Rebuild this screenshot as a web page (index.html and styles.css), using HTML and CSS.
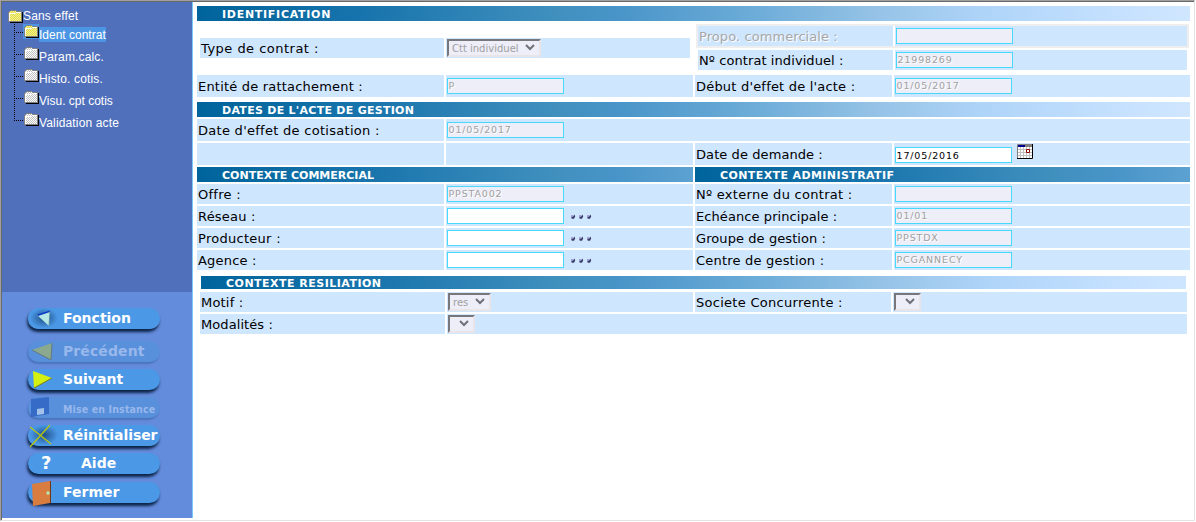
FILE: index.html
```
<!DOCTYPE html>
<html lang="fr">
<head>
<meta charset="utf-8">
<title>Gestion du contrat</title>
<link rel="stylesheet" href="styles.css">
</head>
<body>
<svg width="0" height="0" class="defs">
  <defs>
    <pattern id="checkGrey" width="2" height="2" patternUnits="userSpaceOnUse"><rect width="2" height="2" fill="#fff"/><path d="M0 0h1v1H0zM1 1h1v1H1z" fill="#c0c0c0"/></pattern>
    <pattern id="checkYellow" width="2" height="2" patternUnits="userSpaceOnUse"><rect width="2" height="2" fill="#ffff70"/><path d="M0 0h1v1H0zM1 1h1v1H1z" fill="#d8d068"/></pattern>
    <g id="folder">
      <path d="M14 3h1v11H2v-1h12z" fill="#000"/>
      <path d="M1 3h1V2h1V1h5v1h1v1h5v10H1z" stroke="none"/>
      <path d="M.5 12.500V3.500l2-2h5l1 1h5v10" fill="none" stroke="#808080"/>
      <path d="M1.500 12V4.500h6l1-1h4.500" fill="none" stroke="#fff"/>
      <path d="M0 12.500h14" stroke="#808080"/>
    </g>
    <g id="dots">
      <g id="dot"><path d="M0 2.500h2L3.500 .5 4.200 2.500 3 4.800H.800z" fill="#3c3c6c"/><path d="M0 1h2v1.500H0z" fill="#a8a0e0"/></g>
      <use href="#dot" x="8"/><use href="#dot" x="16"/>
    </g>
  </defs>
</svg>
<div class="frame">
  <aside class="sidebar">
    <nav class="tree">
      <div class="root"><svg class="folder" fill="url(#checkYellow)"><use href="#folder"/></svg><span>Sans effet</span></div>
      <ul>
        <li class="current"><svg class="folder" fill="url(#checkYellow)"><use href="#folder"/></svg><span>Ident contrat</span></li>
        <li><svg class="folder" fill="url(#checkGrey)"><use href="#folder"/></svg><span>Param.calc.</span></li>
        <li><svg class="folder" fill="url(#checkGrey)"><use href="#folder"/></svg><span>Histo. cotis.</span></li>
        <li><svg class="folder" fill="url(#checkGrey)"><use href="#folder"/></svg><span class="t0">Visu. cpt cotis</span></li>
        <li><svg class="folder" fill="url(#checkGrey)"><use href="#folder"/></svg><span>Validation acte</span></li>
      </ul>
    </nav>
    <div class="actions">
      <div class="btn b1 shade"><svg class="ico" viewBox="0 0 30 26"><path d="M9 7 22 3l-1 15z" fill="#b4e8e4"/><path d="M9 6.500 22 2.500v1.500L10 8z" fill="#0838c8"/><path d="M22 3l-1 15" stroke="#5888a0" stroke-width=".8"/></svg><span>Fonction</span></div>
      <div class="btn b2 off"><svg class="ico" viewBox="0 0 30 26"><path d="M4 9 24 2l-1 17z" fill="#c8c830"/><path d="M24 2l-1 17L4 9" fill="none" stroke="#706010"/></svg><span>Précédent</span></div>
      <div class="btn b3"><svg class="ico" viewBox="0 0 30 26"><path d="M5 2 24 9 6 19z" fill="#d4f010"/><path d="M6 19 24 9" stroke="#808010"/></svg><span>Suivant</span></div>
      <div class="btn b4 off"><svg class="ico" viewBox="0 0 30 26"><path d="M3 2 21 0v17L3 20z" fill="#1040b0"/><path d="M9 12l7-1v6l-7 1z" fill="#fff"/></svg><span>Mise en Instance</span></div>
      <div class="btn b5 shade"><svg class="ico" viewBox="0 0 30 26"><path d="M2 2 23 19M22 0 2 22" fill="none" stroke="#b8c810" stroke-width="1.200"/></svg><span>Réinitialiser</span></div>
      <div class="btn b6"><b class="mark">?</b><span>Aide</span></div>
      <div class="btn b7"><svg class="ico" viewBox="0 0 30 26"><path d="M4 2 22-1v22L5 24z" fill="#d87c40"/><path d="M22.500-1v22" stroke="#703818"/><circle cx="20" cy="11" r="1.700" fill="#b8e8b0"/></svg><span>Fermer</span></div>
    </div>
  </aside>
  <main class="main">
    <h2 class="bar s7">IDENTIFICATION</h2>
    <section class="ident">
      <div class="kind">
        <div class="cell"><label class="s5">Type de contrat :</label></div>
        <div class="cell"><div class="select wide"><span>Ctt individuel</span><svg class="chev"><path d="M1 1l4 4 4-4"/></svg></div></div>
      </div>
      <div class="numbers">
        <div class="pair disabled"><div class="cell"><label>Propo. commerciale :</label></div><div class="cell"><div class="input ro"></div></div></div>
        <div class="pair"><div class="cell"><label>Nº contrat individuel :</label></div><div class="cell"><div class="input ro">21998269</div></div></div>
      </div>
    </section>
    <div class="row tall r-ent"><div class="cell"><label class="s2">Entité de rattachement :</label></div><div class="cell"><div class="input ro">P</div></div><div class="cell"><label class="s2">Début d'effet de l'acte :</label></div><div class="cell"><div class="input ro">01/05/2017</div></div></div>
    <h2 class="bar dates s3">DATES DE L'ACTE DE GESTION</h2>
    <div class="row tall"><div class="cell"><label class="s3">Date d'effet de cotisation :</label></div><div class="cell span3"><div class="input ro">01/05/2017</div></div></div>
    <div class="row tall"><div class="cell"></div><div class="cell"></div><div class="cell"><label>Date de demande :</label></div><div class="cell"><div class="input low">17/05/2016</div>
      <svg class="cal" viewBox="0 0 16 15"><path d="M0 0h16v15H0z" fill="#fff"/><path d="M1 5.500h14M1 8.500h14M1 11.500h14M3.500 3v11M6.500 3v11M9.500 3v11M12.500 3v11" stroke="#c0c0c0"/><path d="M1 1h7v2H1z" fill="#000090"/><path d="M8 1h7v2H8z" fill="#808080"/><path d="M.5 15V.5H15" fill="none" stroke="#808080"/><path d="M0 14.500h15.500V0" fill="none" stroke="#000"/><path d="M9.500 5.500h3v3h-3z" fill="#fff" stroke="#900000"/></svg></div></div>
    <div class="heads"><h2 class="bar">CONTEXTE COMMERCIAL</h2><h2 class="bar s4">CONTEXTE ADMINISTRATIF</h2></div>
    <div class="row"><div class="cell"><label class="s3">Offre :</label></div><div class="cell"><div class="input ro">PPSTA002</div></div><div class="cell"><label class="s3">Nº externe du contrat :</label></div><div class="cell"><div class="input ro"></div></div></div>
    <div class="row"><div class="cell"><label class="s2">Réseau :</label></div><div class="cell"><div class="input"></div><svg class="dots"><use href="#dots"/></svg></div><div class="cell"><label>Echéance principale :</label></div><div class="cell"><div class="input ro">01/01</div></div></div>
    <div class="row"><div class="cell"><label class="s3">Producteur :</label></div><div class="cell"><div class="input"></div><svg class="dots"><use href="#dots"/></svg></div><div class="cell"><label>Groupe de gestion :</label></div><div class="cell"><div class="input ro">PPSTDX</div></div></div>
    <div class="row"><div class="cell"><label class="s2">Agence :</label></div><div class="cell"><div class="input"></div><svg class="dots"><use href="#dots"/></svg></div><div class="cell"><label class="s2">Centre de gestion :</label></div><div class="cell"><div class="input ro">PCGANNECY</div></div></div>
    <section class="resil">
      <h2 class="bar s5">CONTEXTE RESILIATION</h2>
      <div class="row"><div class="cell"><label class="s2">Motif :</label></div><div class="cell"><div class="select mid"><span>res</span><svg class="chev"><path d="M1 1l4 4 4-4"/></svg></div></div><div class="cell"><label class="s3">Societe Concurrente :</label></div><div class="cell"><div class="select"><span></span><svg class="chev"><path d="M1 1l4 4 4-4"/></svg></div></div></div>
      <div class="row"><div class="cell"><label>Modalités :</label></div><div class="cell span3"><div class="select"><span></span><svg class="chev"><path d="M1 1l4 4 4-4"/></svg></div></div></div>
    </section>
  </main>
</div>
</body>
</html>
```
FILE: styles.css
```
* { box-sizing: border-box; }
body { margin: 0; background: #fff; font-family: "DejaVu Sans", sans-serif; font-size: 13px; color: #000; overflow: hidden; }
svg { display: block; overflow: visible; flex: none; }
.defs { position: absolute; }
.frame { width: 1195px; height: 521px; display: flex; border: 1px solid #a0a0a0; border-right-color: #e3e3e3; border-bottom-color: #e3e3e3; box-shadow: inset 1px 1px 0 #696969; padding: 1px; }

.sidebar { width: 191px; height: 516px; border-right: 1px solid #78c8f8; background: #648cdc; flex: none; }
.tree { height: 290px; background: #5070bc; padding: 6px 0 0 6px; color: #fff; font: 12px/15px "Liberation Sans", Arial, sans-serif; letter-spacing: .15px; }
.root { display: flex; align-items: center; height: 16px; }
.folder { width: 15px; height: 14px; }
.tree ul { list-style: none; margin: 0 0 0 6px; padding: 0; background: repeating-linear-gradient(#000 0 1px, transparent 1px 2px) 0 0 / 1px 97px no-repeat; }
.tree li { height: 22px; padding-left: 9px; display: flex; background: repeating-linear-gradient(90deg, #000 0 1px, transparent 1px 2px) 0 8px / 9px 1px no-repeat; }
.tree li span { margin-top: 3px; height: 15px; line-height: 17px; white-space: nowrap; }
.tree li .folder { width: 16px; height: 15px; padding-left: 1px; }
.tree .current span, .tree .t0 { letter-spacing: 0; }
.current span, .current .folder { background: #4c94e4; }

.actions { display: flex; flex-direction: column; padding: 16px 0 0 26px; }
.btn { width: 132px; height: 21px; margin-bottom: 1px; border-radius: 11px; display: flex; background: #4a98e6; box-shadow: -1px 3px 3px #0c2448; color: #fff; font: bold 14px/20px "DejaVu Sans", sans-serif; white-space: nowrap; }
.shade { background: radial-gradient(ellipse 14px 10px at 16px 10px, #205088, #4a98e6); }
.ico { width: 30px; height: 26px; }
.btn span { margin-left: 5px; }
.off { background: #5890dc; box-shadow: -1px 2px 2px #4c74bc; color: #98b8ec; }
.off .ico { opacity: .45; }
.b2 { margin-top: 11px; letter-spacing: .1px; }
.b3 { margin-top: 6px; }
.b4 { margin-top: 6px; font-family: "DejaVu Sans Condensed", "DejaVu Sans", sans-serif; font-stretch: condensed; font-size: 10.500px; line-height: 24px; letter-spacing: .15px; }
.b5 { margin-top: 6px; letter-spacing: -.05px; }
.b6 { margin-top: 6px; }
.b7 { margin-top: 7px; }
.mark { width: 30px; padding-left: 13px; font-size: 18px; line-height: 19px; }
.b6 span { margin-left: 23px; }

.main { width: 1001px; padding: 4px 4px 0 4px; }
.bar { margin: 0; height: 15px; padding-left: 25px; color: #fff; font: bold 11px/17px "DejaVu Sans", sans-serif; white-space: nowrap; background: linear-gradient(90deg, #00649c 0, #0868a0 5%, #1874ac 17%, #4090be 36%, #4894c8 42%, #6cacd8 56%, #94c2e6 68%, #aed4f8 79%, #c4e0ff 92%, #d0e6ff 100%) 0 0 / 993px 100% no-repeat; }
.ident { height: 54px; display: flex; padding-top: 3px; }
.kind { display: flex; gap: 2px; margin: 14px 0 0 3px; height: 20px; width: 490px; }
.kind .cell { width: 244px; }
.numbers { margin-left: 6px; width: 493px; }
.pair { display: flex; gap: 2px; height: 20px; margin: 2px; }
.pair.disabled { height: 24px; border: 2px solid #eee; margin: 0; }
.pair .cell:first-child { width: 195px; }
.pair .cell:last-child { width: 292px; }
.disabled label { color: #a8a8a8; text-shadow: 1px 1px 0 #fff; }
.cell { background: #cfe6ff; display: flex; align-items: center; padding-left: 1px; }
label { white-space: nowrap; height: 20px; line-height: 22px; letter-spacing: .08px; }
.s2 { letter-spacing: .2px; }
.s3 { letter-spacing: .28px; }
.s4 { letter-spacing: .4px; }
.s5 { letter-spacing: .48px; }
.s7 { letter-spacing: .72px; }
.row { display: grid; grid-template-columns: 247px 247px 197px 296px; column-gap: 2px; height: 20px; margin-bottom: 2px; }
.row.tall { height: 22px; }
.span3 { grid-column: span 3; }
.dates { margin: 5px 0 2px; }
.r-ent { margin-bottom: 0; }
.heads { display: grid; grid-template-columns: 496px 495px; column-gap: 2px; margin-bottom: 2px; }
.input { width: 117px; height: 16px; border: 1px solid #48d8fc; background: #fff; font-size: 9.500px; line-height: 14px; letter-spacing: .85px; padding-left: 1px; text-indent: -.5px; }
.input.low { height: 16px; line-height: 16px; margin-top: 1px; }
.input.ro { background: #eeeef8; color: #a0a0a0; text-shadow: 1px 1px 0 #fff; }
.cal { width: 16px; height: 15px; margin: -6px 0 0 5px; }
.dots { width: 21px; height: 4px; margin: 0 0 0 7px; }
.select { width: 27px; height: 18px; border: 2px solid #e8e4e8; border-top-color: #78787c; border-left-color: #78787c; background: #eeeef8; display: flex; justify-content: space-between; align-items: center; color: #a0a0a0; font-size: 10px; padding: 0 4px 0 3px; }
.select.wide { width: 94px; }
.select.mid { width: 43px; }
.chev { width: 10px; height: 6px; margin-top: -2px; fill: none; stroke: #707078; stroke-width: 2; }
.resil { padding: 4px 3px 0; }
.resil .bar { margin: 0 1px 3px; height: 13px; line-height: 15px; }
.resil .row { grid-template-columns: 245px 246px 196px 294px; }
```
